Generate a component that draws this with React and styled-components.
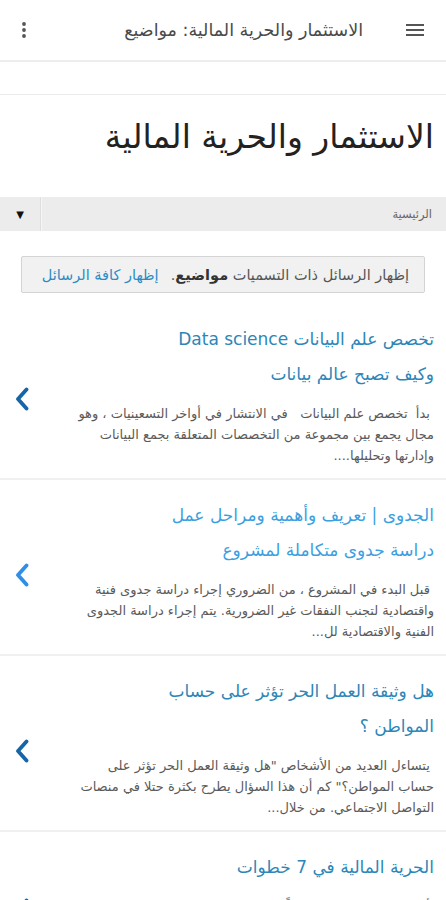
import React from 'react';
import styled, { createGlobalStyle } from 'styled-components';

const Global = createGlobalStyle`
  html, body { margin: 0; padding: 0; background: #fff; }
  body { font-family: "DejaVu Sans", sans-serif; }
`;

const Page = styled.div`
  direction: rtl;
  width: 446px;
  height: 900px;
  overflow: hidden;
  background: #fff;
`;

const Header = styled.header`
  height: 60px;
  display: flex;
  align-items: center;
  padding: 0 21px 0 20px;
  border-bottom: 2px solid #ededed;
`;

const HeaderTitle = styled.div`
  margin-right: 42px;
  font-size: 17.5px;
  color: #4a4a4a;
  white-space: nowrap;
`;

const Spacer = styled.div`
  flex: 1;
`;

const IconBtn = styled.div`
  display: flex;
  align-items: center;
  justify-content: center;
  color: #555;
`;

const Band = styled.div`
  height: 32px;
  border-bottom: 1px solid #ebebeb;
`;

const PageTitle = styled.h1`
  margin: 0;
  padding: 14px 12px 0;
  font-size: 33px;
  line-height: 56px;
  font-weight: normal;
  color: #222;
`;

const Dropdown = styled.div`
  margin-top: 32px;
  height: 34px;
  display: flex;
  align-items: stretch;
  background: #ececec;
`;

const DropLabel = styled.div`
  flex: 1;
  display: flex;
  align-items: center;
  padding-right: 14px;
  font-size: 11.5px;
  color: #666;
`;

const DropArrow = styled.div`
  width: 40px;
  display: flex;
  align-items: center;
  justify-content: center;
  border-right: 1px solid #dedede;
  box-shadow: 1px 0 0 #f6f6f6;
  font-size: 10px;
  color: #111;
`;

const InfoBox = styled.div`
  margin: 25px 21px 0;
  height: 37px;
  box-sizing: border-box;
  display: flex;
  align-items: center;
  padding: 0 15px;
  background: #f1f1f1;
  border: 1px solid #d4d4d4;
  border-radius: 2px;
  font-size: 14.5px;
  color: #555;
  white-space: nowrap;
`;

const Strong = styled.b`
  color: #333;
  font-weight: bold;
`;

const Link = styled.span`
  color: #2b8cc4;
  margin-right: 12px;
`;

const List = styled.div`
  margin-top: 11px;
`;

const Post = styled.article`
  display: flex;
  align-items: center;
  padding: 18px 12px 12px 14px;
  border-bottom: 2px solid #f0f0f0;
`;

const PostBody = styled.div`
  flex: 1;
  min-width: 0;
`;

const PostTitle = styled.h2`
  margin: 0;
  font-size: 17px;
  line-height: 35px;
  font-weight: normal;
  color: ${p => (p.$bright ? '#3c9fe0' : '#2c86b8')};
`;

const Line = styled.span`
  display: block;
  white-space: nowrap;
`;

const Excerpt = styled.p`
  margin: 11px 0 0;
  font-size: 13px;
  line-height: 21px;
  color: #5a5a5a;
`;

const Chevron = styled.div`
  width: 22px;
  margin-top: 10px;
  display: flex;
  justify-content: flex-end;
  color: ${p => (p.$bright ? '#2f8ee6' : '#1765a6')};
`;

const posts = [
  {
    title: ['تخصص علم البيانات Data science', 'وكيف تصبح عالم بيانات'],
    excerpt: [
      '\u00a0بدأ\u00a0 تخصص علم البيانات \u00a0 في الانتشار في أواخر التسعينيات ، وهو',
      'مجال يجمع بين مجموعة من التخصصات المتعلقة بجمع البيانات',
      'وإدارتها وتحليلها....',
    ],
  },
  {
    bright: true,
    title: ['الجدوى | تعريف وأهمية ومراحل عمل', 'دراسة جدوى متكاملة لمشروع'],
    excerpt: [
      '\u00a0قبل البدء في المشروع ، من الضروري إجراء دراسة جدوى فنية',
      'واقتصادية لتجنب النفقات غير الضرورية. يتم إجراء دراسة الجدوى',
      'الفنية والاقتصادية لل...',
    ],
  },
  {
    title: ['هل وثيقة العمل الحر تؤثر على حساب', 'المواطن ؟'],
    excerpt: [
      '\u00a0يتساءل العديد من الأشخاص "هل وثيقة العمل الحر تؤثر على',
      'حساب المواطن؟" كم أن هذا السؤال يطرح بكثرة حتلا في منصات',
      'التواصل الاجتماعي. من خلال...',
    ],
  },
  {
    title: ['الحرية المالية في 7 خطوات'],
    excerpt: [
      '\u00a0أصبحت الحرية المالية حلماً يسعى إليه الكثيرون في هذا العصر',
      'حيث يرغب الجميع في التحرر من قيود الوظيفة والراتب الشهري',
      'والعيش بحرية...',
    ],
  },
];

const Hamburger = () => (
  <svg width="20" height="16" viewBox="0 0 20 16">
    <rect x="1" y="2" width="18" height="2" fill="#555" />
    <rect x="1" y="7" width="18" height="2" fill="#555" />
    <rect x="1" y="12" width="18" height="2" fill="#555" />
  </svg>
);

const Kebab = () => (
  <svg width="8" height="18" viewBox="0 0 8 18">
    <circle cx="4" cy="3" r="1.9" fill="#555" />
    <circle cx="4" cy="9" r="1.9" fill="#555" />
    <circle cx="4" cy="15" r="1.9" fill="#555" />
  </svg>
);

const ChevronIcon = () => (
  <svg width="16" height="24" viewBox="0 0 16 24">
    <polyline points="12.5,2.5 4,12 12.5,21.5" fill="none" stroke="currentColor" strokeWidth="3.8" strokeLinecap="round" strokeLinejoin="round" />
  </svg>
);

export default function App() {
  return (
    <>
      <Global />
      <Page>
        <Header>
          <IconBtn><Hamburger /></IconBtn>
          <HeaderTitle>الاستثمار والحرية المالية: مواضيع</HeaderTitle>
          <Spacer />
          <IconBtn><Kebab /></IconBtn>
        </Header>
        <Band />
        <PageTitle>الاستثمار والحرية المالية</PageTitle>
        <Dropdown>
          <DropLabel>الرئيسية</DropLabel>
          <DropArrow>▼</DropArrow>
        </Dropdown>
        <InfoBox>
          <span>إظهار الرسائل ذات التسميات <Strong>مواضيع</Strong>.</span>
          <Link>إظهار كافة الرسائل</Link>
        </InfoBox>
        <List>
          {posts.map((p, i) => (
            <Post key={i}>
              <PostBody>
                <PostTitle $bright={p.bright}>
                  {p.title.map((t, j) => <Line key={j}>{t}</Line>)}
                </PostTitle>
                <Excerpt>
                  {p.excerpt.map((t, j) => <Line key={j}>{t}</Line>)}
                </Excerpt>
              </PostBody>
              <Chevron $bright={p.bright}><ChevronIcon /></Chevron>
            </Post>
          ))}
        </List>
      </Page>
    </>
  );
}
